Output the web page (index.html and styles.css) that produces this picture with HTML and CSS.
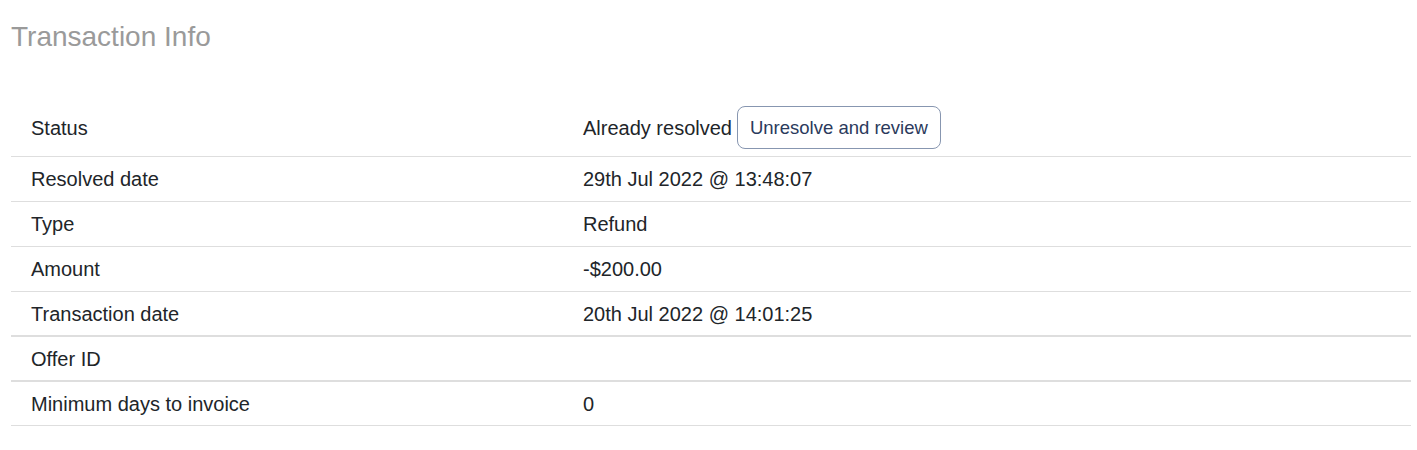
FILE: index.html
```html
<!DOCTYPE html>
<html>
<head>
<meta charset="utf-8">
<link rel="stylesheet" href="styles.css">
</head>
<body>
<div class="page">
  <h2 class="title">Transaction Info</h2>
  <table class="info">
    <tbody>
      <tr class="row-status">
        <td class="label">Status</td>
        <td class="value"><span class="status-text">Already resolved</span><button class="btn">Unresolve and review</button></td>
      </tr>
      <tr>
        <td class="label">Resolved date</td>
        <td class="value">29th Jul 2022 @ 13:48:07</td>
      </tr>
      <tr>
        <td class="label">Type</td>
        <td class="value">Refund</td>
      </tr>
      <tr>
        <td class="label">Amount</td>
        <td class="value">-$200.00</td>
      </tr>
      <tr class="thick">
        <td class="label">Transaction date</td>
        <td class="value">20th Jul 2022 @ 14:01:25</td>
      </tr>
      <tr class="thick">
        <td class="label">Offer ID</td>
        <td class="value"></td>
      </tr>
      <tr class="last">
        <td class="label">Minimum days to invoice</td>
        <td class="value">0</td>
      </tr>
    </tbody>
  </table>
</div>
</body>
</html>
```

FILE: styles.css
```css
html, body {
  margin: 0;
  padding: 0;
  background: #fff;
}

.page {
  padding: 0 0 0 11px;
  font-family: "Liberation Sans", Arial, sans-serif;
  color: #212529;
}

.title {
  margin: 0;
  padding-top: 21px;
  font-size: 28px;
  line-height: 32px;
  font-weight: normal;
  color: #9a9a9a;
}

.info {
  margin-top: 47px;
  width: 1400px;
  border-collapse: separate;
  border-spacing: 0;
  font-size: 20px;
  line-height: 20px;
}

.info td {
  padding: 12px 20px;
  border-bottom: 1px solid #dedede;
  vertical-align: middle;
  white-space: nowrap;
}

.info tr.thick td {
  padding-bottom: 11px;
  border-bottom: 2px solid #dedede;
}

.info tr.last td {
  padding-bottom: 11px;
}

.info .label {
  width: 512px;
}

.row-status td {
  padding-top: 6px;
  padding-bottom: 7px;
}

.status-text {
  display: inline-block;
  vertical-align: middle;
  margin-right: 5px;
}

.btn {
  display: inline-block;
  vertical-align: middle;
  height: 43px;
  padding: 0 12px;
  font-family: "Liberation Sans", Arial, sans-serif;
  font-size: 18.5px;
  color: #2b3a5c;
  background: #fff;
  border: 1px solid #8796b0;
  border-radius: 8px;
}
```
